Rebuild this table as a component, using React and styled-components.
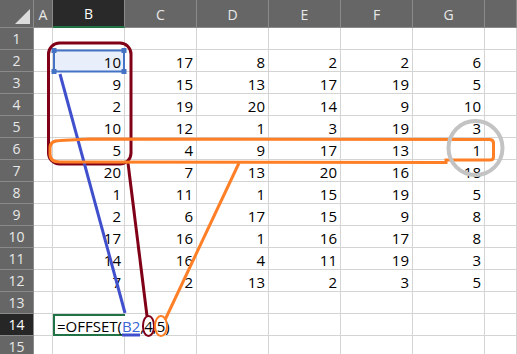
import React from "react";
import styled, { createGlobalStyle } from "styled-components";

const GlobalStyle = createGlobalStyle`
  html, body {
    margin: 0;
    padding: 0;
    background: #fff;
    overflow: hidden;
  }
`;

const Sheet = styled.div`
  position: relative;
  display: grid;
  grid-template-columns: 34px 19px repeat(6, 72px) 1fr;
  grid-template-rows: 28px repeat(15, 22px);
  width: 517px;
  height: 354px;
  overflow: hidden;
  font-family: "Open Sans", "Liberation Sans", sans-serif;
`;

const Corner = styled.div`
  position: relative;
  background: #666666;
  border-right: 1px solid #8a8a8a;
  border-bottom: 1px solid #8a8a8a;
  box-sizing: border-box;

  &::after {
    content: "";
    position: absolute;
    right: 3px;
    bottom: 3px;
    border-style: solid;
    border-width: 0 0 15px 15px;
    border-color: transparent transparent #dcdcdc transparent;
  }
`;

const ColHead = styled.div`
  display: flex;
  align-items: center;
  justify-content: center;
  box-sizing: border-box;
  background: ${(p) => (p.$active ? "#292929" : "#666666")};
  color: ${(p) => (p.$active ? "#ffffff" : "#e8e8e8")};
  border-right: 1px solid #8a8a8a;
  border-bottom: ${(p) => (p.$active ? "2px solid #217346" : "1px solid #8a8a8a")};
  font-size: 14px;
  padding-top: 1px;
`;

const RowHead = styled.div`
  display: flex;
  align-items: center;
  justify-content: center;
  box-sizing: border-box;
  background: ${(p) => (p.$active ? "#262626" : "#666666")};
  color: ${(p) => (p.$active ? "#ffffff" : "#e8e8e8")};
  border-right: 1px solid #8a8a8a;
  border-bottom: 1px solid #8a8a8a;
  font-size: 14px;
`;

const Cell = styled.div`
  display: flex;
  align-items: center;
  justify-content: flex-end;
  box-sizing: border-box;
  padding: 2px 3px 0 0;
  border-right: 1px solid #d4d4d4;
  border-bottom: 1px solid #d4d4d4;
  background: ${(p) => (p.$selected ? "#e8effa" : "transparent")};
  color: #000;
  font-size: 15px;
  white-space: nowrap;
`;

const EditCell = styled(Cell)`
  justify-content: flex-start;
  padding: 2px 0 0 4px;
  border-right: none;
  border-bottom: none;
  box-shadow: inset 2px 2px 0 #217346, inset 0 -2px 0 #217346;
  overflow: visible;
  z-index: 1;
`;

const Ref = styled.span`
  color: #3a63d4;
`;

const Arg = styled.span`
  position: relative;
  display: inline-block;

  &::after {
    content: "";
    position: absolute;
    left: -2.5px;
    right: -2.5px;
    top: -1px;
    bottom: -1px;
    border: 2.5px solid ${(p) => p.$ring};
    border-radius: 50%;
  }
`;

const Caret = styled.span`
  display: inline-block;
  width: 1px;
  height: 17px;
  margin-left: 3px;
  background: #000;
`;

const Overlay = styled.svg`
  position: absolute;
  inset: 0;
  pointer-events: none;
  z-index: 2;
`;

const cols = ["A", "B", "C", "D", "E", "F", "G", ""];

const data = {
  2: [10, 17, 8, 2, 2, 6],
  3: [9, 15, 13, 17, 19, 5],
  4: [2, 19, 20, 14, 9, 10],
  5: [10, 12, 1, 3, 19, 3],
  6: [5, 4, 9, 17, 13, 1],
  7: [20, 7, 13, 20, 16, 18],
  8: [1, 11, 1, 15, 19, 5],
  9: [2, 6, 17, 15, 9, 8],
  10: [17, 16, 1, 16, 17, 8],
  11: [14, 16, 4, 11, 19, 3],
  12: [7, 2, 13, 2, 3, 5],
};

const SELECT = "#4472c4";
const BLUE = "#4050cc";
const RED = "#800018";
const ORANGE = "#ff7f27";

const Annotations = () => (
  <Overlay width="517" height="354" viewBox="0 0 517 354">
    {/* selected B2 */}
    <rect x="54" y="50.5" width="70" height="21" fill="none" stroke={SELECT} strokeWidth="2" />
    {[[54, 50.5], [124, 50.5], [54, 71.5], [124, 71.5]].map(([x, y]) => (
      <rect key={`${x}-${y}`} x={x - 2.5} y={y - 2.5} width="5" height="5" fill={SELECT} />
    ))}

    {/* rows/height box */}
    <rect x="48.5" y="43" width="82.5" height="121" rx="11" fill="none" stroke={RED} strokeWidth="3" />
    <path d="M128 163 L147 316" fill="none" stroke={RED} strokeWidth="3" />

    {/* reference line */}
    <path d="M60 74 L125 313" fill="none" stroke={BLUE} strokeWidth="3" />
    <path d="M122 335 L140 335" fill="none" stroke={BLUE} strokeWidth="3" />

    {/* row 6 box */}
    <path
      d="M60 140.5 L90 139 L490 139.5 Q493.5 140 493.5 143 L493.5 157 Q493.5 160 490 160 L446 160 L446 162.5 L60 162 Q50 162 50 154 L50 148 Q50 140.5 60 140.5 Z"
      fill="none"
      stroke={ORANGE}
      strokeWidth="3"
    />
    <path d="M239 163 L165 320" fill="none" stroke={ORANGE} strokeWidth="3" />

    {/* result */}
    <circle cx="475.5" cy="148" r="27" fill="none" stroke="#c3c3c3" strokeWidth="4" />
  </Overlay>
);

const App = () => {
  const rows = Array.from({ length: 15 }, (_, i) => i + 1);
  return (
    <>
      <GlobalStyle />
      <Sheet>
        <Corner />
        {cols.map((c, i) => (
          <ColHead key={i} $active={c === "B"}>
            {c}
          </ColHead>
        ))}
        {rows.map((r) => (
          <React.Fragment key={r}>
            <RowHead $active={r === 14}>{r}</RowHead>
            <Cell />
            {[0, 1, 2, 3, 4, 5].map((ci) => {
              if (r === 14 && ci === 0) {
                return (
                  <EditCell key={ci}>
                    =OFFSET(<Ref>B2</Ref>,<Arg $ring={RED}>4</Arg>,<Arg $ring={ORANGE}>5</Arg>)
                    <Caret />
                  </EditCell>
                );
              }
              return (
                <Cell key={ci} $selected={r === 2 && ci === 0}>
                  {data[r] ? data[r][ci] : ""}
                </Cell>
              );
            })}
            <Cell />
          </React.Fragment>
        ))}
        <Annotations />
      </Sheet>
    </>
  );
};

export default App;
